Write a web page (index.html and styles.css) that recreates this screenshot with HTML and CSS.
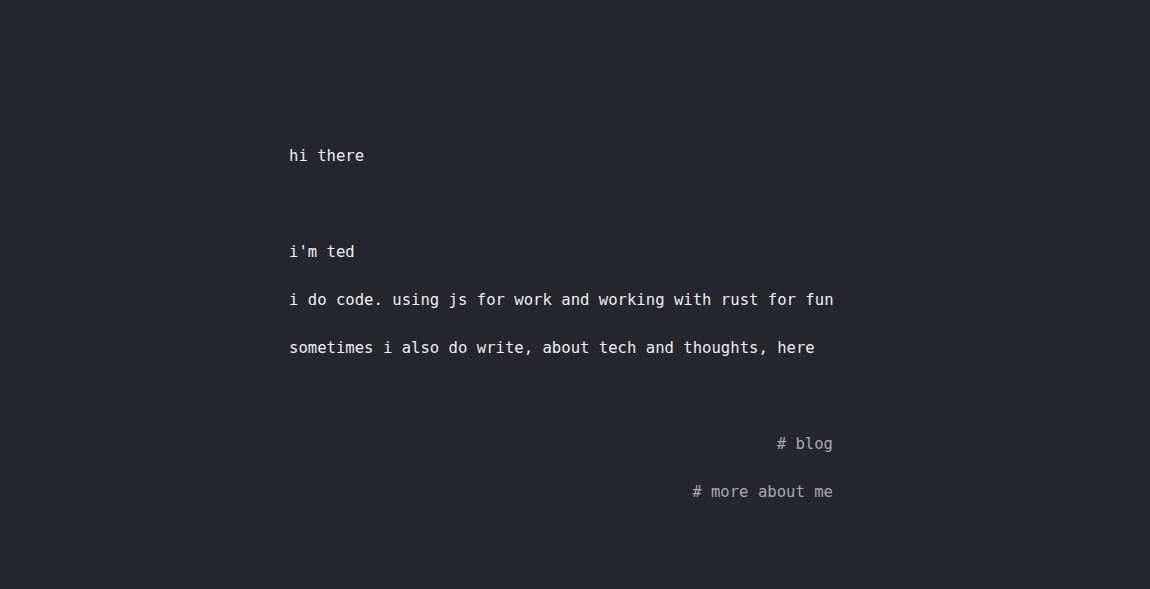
FILE: index.html
```html
<!DOCTYPE html>
<html>
<head>
<meta charset="utf-8">
<link rel="stylesheet" href="styles.css">
</head>
<body>
<main class="page">
  <p class="line greet">hi there</p>
  <div class="intro">
    <p class="line">i'm ted</p>
    <p class="line">i do code. using js for work and working with rust for fun</p>
    <p class="line">sometimes i also do write, about tech and thoughts, here</p>
  </div>
  <nav class="links">
    <a class="link" href="#">#&nbsp;blog</a>
    <a class="link" href="#">#&nbsp;more about me</a>
  </nav>
</main>
</body>
</html>
```
FILE: styles.css
```css
html, body {
  margin: 0;
  padding: 0;
  background: #23262c;
  height: 100%;
}
body {
  font-family: "DejaVu Sans Mono", monospace;
  font-size: 15.6px;
  line-height: 24px;
  color: #eceef0;
}
.page {
  width: 544px;
  margin: 0 0 0 289px;
  padding-top: 144px;
  display: flex;
  flex-direction: column;
}
.line {
  margin: 0;
  white-space: nowrap;
}
.intro {
  margin-top: 72px;
  display: flex;
  flex-direction: column;
  gap: 24px;
}
.links {
  margin-top: 72px;
  display: flex;
  flex-direction: column;
  align-items: flex-end;
  gap: 24px;
}
.link {
  color: #a7a9ac;
  text-decoration: none;
  white-space: nowrap;
}
```
